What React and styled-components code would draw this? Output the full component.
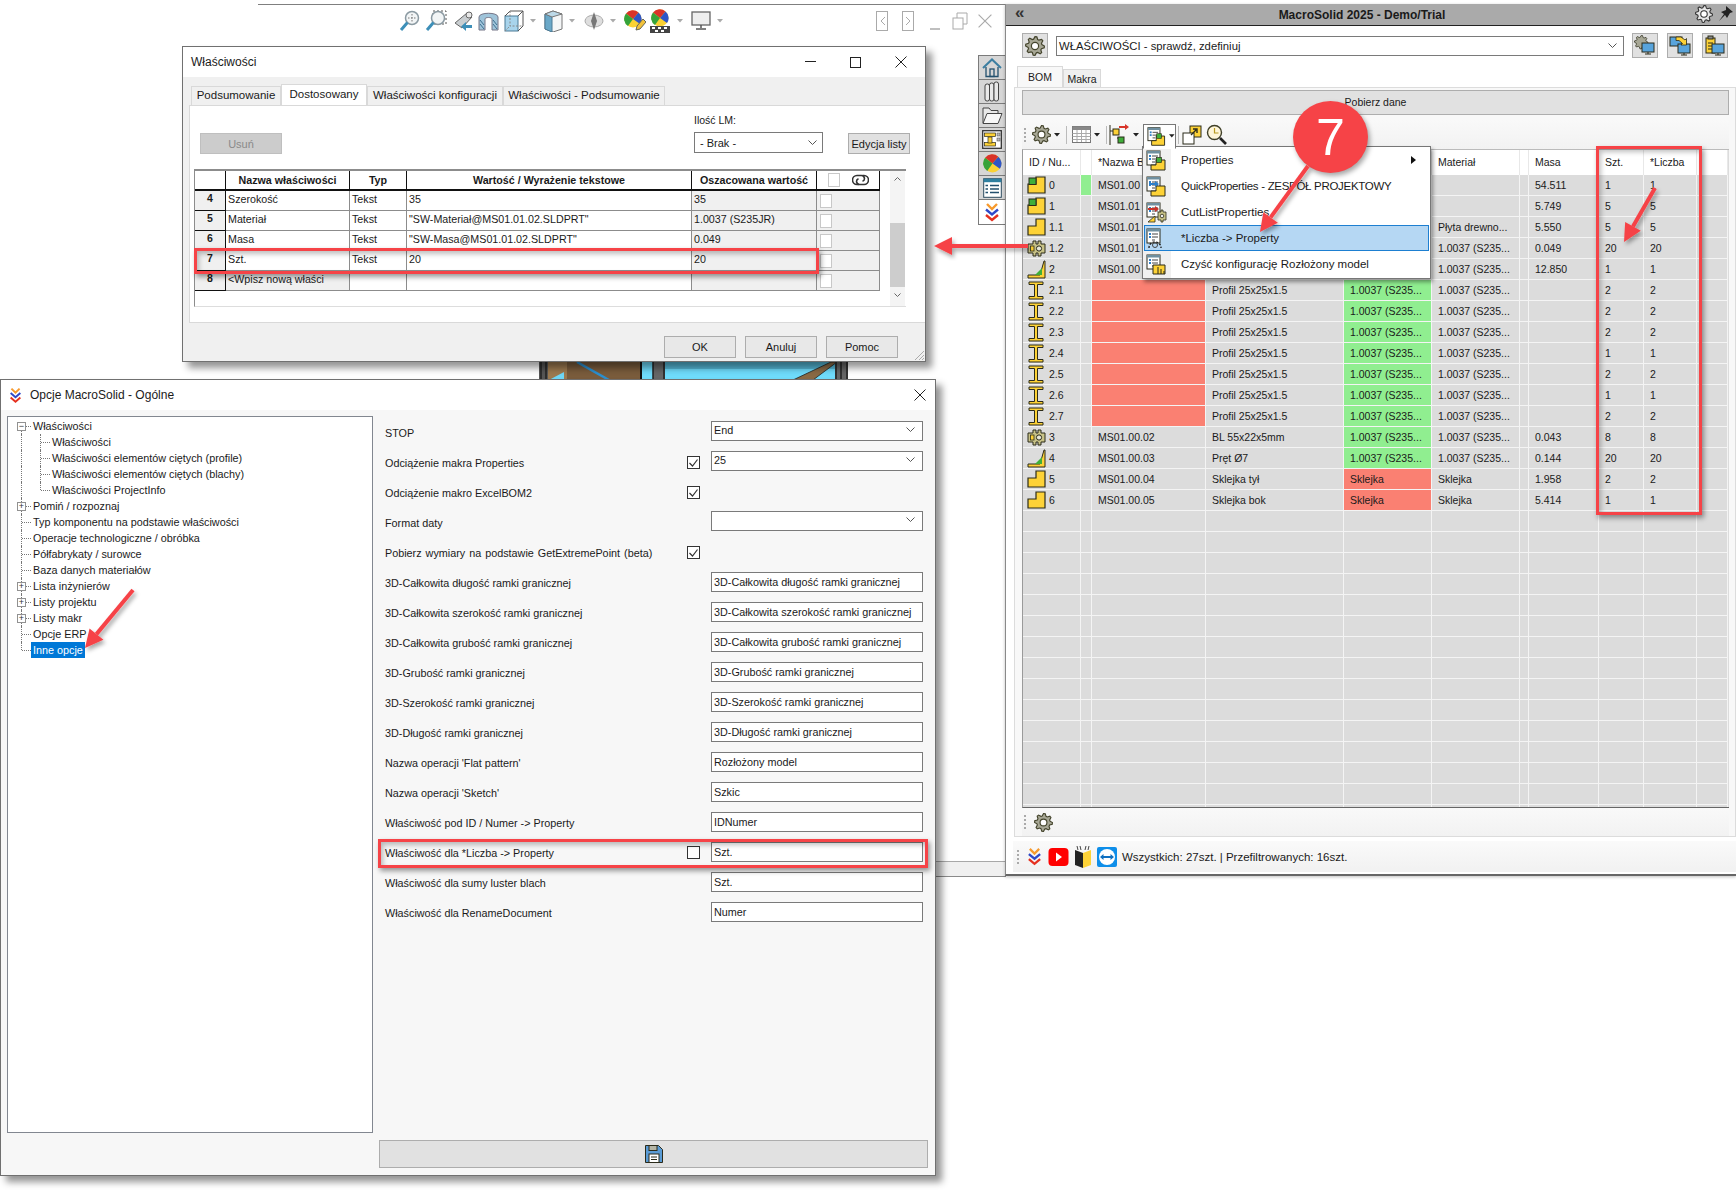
import React from 'react'
import styled, { createGlobalStyle } from 'styled-components'

const GlobalStyle = createGlobalStyle`
  html, body {
    margin: 0;
    padding: 0;
    background: #fff;
  }
  * {
    box-sizing: border-box;
  }
  body {
    font-family: "Liberation Sans", Arial, sans-serif;
    color: #1a1a1a;
  }
`

const RED = '#f64347'
const YEL = '#fdd237'
const INK = '#2b2b1a'

/* ---------- icons ---------- */

const gearPath = (cx, cy, r1, r2, teeth) => {
  let d = ''
  const step = (Math.PI * 2) / (teeth * 4)
  for (let i = 0; i < teeth * 4; i++) {
    const r = i % 4 < 2 ? r1 : r2
    const a = i * step
    d += `${i === 0 ? 'M' : 'L'}${(cx + r * Math.cos(a)).toFixed(2)} ${(cy + r * Math.sin(a)).toFixed(2)} `
  }
  return d + 'Z'
}

const Gear = ({ size = 20, fill = '#a7a795', stroke = '#44442c' }) => (
  <svg width={size} height={size} viewBox="0 0 20 20">
    <path d={gearPath(10, 10, 9.4, 7, 8)} fill={fill} stroke={stroke} strokeWidth="1.2" />
    <circle cx="10" cy="10" r="3.6" fill="#fff" stroke={stroke} strokeWidth="1.2" />
  </svg>
)

const Logo = ({ size = 16 }) => (
  <svg width={size} height={size * 1.25} viewBox="0 0 16 20" fill="none" strokeWidth="2.4">
    <path d="M3 2l5 5 5-5" stroke="#f79a2e" />
    <path d="M2 7.5l6 5 6-5" stroke="#2f48c8" />
    <path d="M2 13l6 5 6-5" stroke="#e5301f" />
  </svg>
)

const Caret = ({ color = '#222' }) => (
  <svg width="6" height="4" viewBox="0 0 6 4"><path d="M0 0h6L3 3.6z" fill={color} /></svg>
)

const ChevronShape = ({ className }) => (
  <svg className={className} width="9" height="6" viewBox="0 0 9 6" fill="none" stroke="#555" strokeWidth="1"><path d="M.5.5l4 4 4-4" /></svg>
)

const Chevron = styled(ChevronShape)`
  margin-left: auto;
  flex: none;
`

const PartIcon = ({ green }) => (
  <svg width="19" height="18" viewBox="0 0 19 18">
    <path d="M9 1h9v16H1V8h8z" fill={YEL} stroke={INK} strokeWidth="1.2" />
    {green && <rect x="2" y="2" width="7" height="6.5" fill="#3fae3a" stroke={INK} strokeWidth="1" />}
  </svg>
)

const BeamIcon = () => (
  <svg width="19" height="19" viewBox="0 0 19 19">
    <path d="M2 1h14v2.5h-5.5v12H16V18H2v-2.5h5.500v-12H2z" fill={YEL} stroke={INK} strokeWidth="1" />
  </svg>
)

const RodIcon = () => (
  <svg width="19" height="19" viewBox="0 0 19 19">
    <path d="M1 15h12l4-14h1v17H1z" fill={YEL} stroke={INK} strokeWidth="1" />
    <path d="M8 15l7-7v7z" fill="#3fae3a" />
  </svg>
)

const SheetIcon = () => (
  <svg width="19" height="19" viewBox="0 0 19 19">
    <path d="M1 5h5V2h3v3h2V2h3v3h4v9h-4v3h-3v-3H9v3H6v-3H1z" fill="#c9c388" stroke={INK} strokeWidth="1" />
    <circle cx="12" cy="9.500" r="2.600" fill="#e8e8d8" stroke={INK} />
    <rect x="3.500" y="7" width="3.500" height="5" fill={YEL} stroke={INK} strokeWidth=".8" />
  </svg>
)

const ListSheet = () => (
  <>
    <rect x="1" y="1" width="13" height="14" fill="#fff" stroke={INK} />
    <rect x="1" y="1" width="13" height="2.500" fill="#6f8f9f" />
    <rect x="3" y="5" width="2" height="2" fill="#2f7fc8" />
    <path d="M6 6h6M6 9h6M6 12h3" stroke="#444" />
    <rect x="3" y="8" width="2" height="2" fill="#2f7fc8" />
  </>
)

const PropsIcon = () => (
  <svg width="21" height="21" viewBox="0 0 21 21">
    <ListSheet />
    <path d="M10 10h9v10H5v-5h5z" fill={YEL} stroke={INK} />
    <rect x="10.500" y="7.500" width="5" height="5" fill="#3fae3a" stroke={INK} strokeWidth=".7" />
  </svg>
)

const QuickIcon = () => (
  <svg width="21" height="21" viewBox="0 0 21 21">
    <ListSheet />
    <path d="M10 10h9v10H5v-5h5z" fill={YEL} stroke={INK} />
    <path d="M3 7h6V5l4 3-4 3V9H3z" fill="#2f7fc8" />
  </svg>
)

const CutIcon = () => (
  <svg width="21" height="21" viewBox="0 0 21 21">
    <ListSheet />
    <path d="M2 6h7V4l4 3-4 3V8H2z" fill="#c8322a" />
    <path d="M12 10h3V8h2v2h3v8h-3v2h-2v-2h-3z" fill="#c9c388" stroke={INK} strokeWidth=".8" />
    <circle cx="16" cy="14" r="1.800" fill="#eee" stroke={INK} strokeWidth=".8" />
    <path d="M2 20h7v-6z" fill={YEL} stroke={INK} strokeWidth=".8" />
  </svg>
)

const HoverCursorIcon = () => (
  <svg width="21" height="21" viewBox="0 0 21 21">
    <ListSheet />
    <path d="M3 20c0-4 3-6 6-6s6 2 6 6" fill="none" stroke="#222" strokeDasharray="2 1.500" strokeWidth="1.400" />
    <circle cx="9" cy="17" r="2.500" fill="none" stroke="#444" />
  </svg>
)

const ClearIcon = () => (
  <svg width="21" height="21" viewBox="0 0 21 21">
    <ListSheet />
    <path d="M7 11h12v9H7z" fill={YEL} stroke={INK} />
    <path d="M12 13v7M15 15v5M18 17v3" stroke={INK} />
  </svg>
)

const Monitor = ({ x, y }) => (
  <g>
    <rect x={x} y={y} width="12" height="9" fill="#58a4dc" stroke={INK} />
    <path d={`M${x + 3} ${y + 11}h6M${x + 6} ${y + 9}v2`} stroke={INK} />
  </g>
)

const SyncGearIcon = () => (
  <svg width="22" height="22" viewBox="0 0 22 22">
    <g transform="translate(0 0) scale(.72)"><path d={gearPath(10, 10, 9.400, 7, 8)} fill="#a7a795" stroke={INK} /></g>
    <Monitor x={8} y={8} />
  </svg>
)

const SyncArrowIcon = () => (
  <svg width="22" height="22" viewBox="0 0 22 22">
    <rect x="1" y="2" width="12" height="9" fill="#58a4dc" stroke={INK} />
    <Monitor x={9} y={9} />
    <path d="M7 2h5l4 3 1.500-1.500V10H12l1.500-1.500L10 5.500H7z" fill={YEL} stroke={INK} strokeWidth=".8" />
  </svg>
)

const SyncDocIcon = () => (
  <svg width="22" height="22" viewBox="0 0 22 22">
    <rect x="2" y="3" width="9" height="15" fill={YEL} stroke={INK} />
    <rect x="4" y="1" width="5" height="3" fill="#888" stroke={INK} />
    <path d="M4 8h5M4 11h5M4 14h5" stroke={INK} />
    <Monitor x={8} y={9} />
  </svg>
)

const TableIcon = () => (
  <svg width="19" height="19" viewBox="0 0 19 19">
    <rect x=".5" y="1.500" width="18" height="16" fill="#fff" stroke="#777" />
    <rect x=".5" y="1.500" width="18" height="3.500" fill="#888" />
    <path d="M.5 8.500h18M.5 11.500h18M.5 14.500h18M5 5v12M9.500 5v12M14 5v12" stroke="#aaa" />
  </svg>
)

const TreeIcon = () => (
  <svg width="22" height="22" viewBox="0 0 22 22">
    <path d="M2 1v20M2 7h5M9 14h3" stroke={INK} fill="none" />
    <rect x="5" y="5" width="6" height="6" fill={YEL} stroke={INK} />
    <rect x="10" y="13" width="6" height="6" fill="#3fae3a" stroke={INK} />
    <path d="M11 2h6V0l4 3-4 3V4h-6z" fill="#d8352a" />
  </svg>
)

const ExportIcon = () => (
  <svg width="20" height="20" viewBox="0 0 20 20">
    <rect x="8" y="1" width="11" height="11" fill={YEL} stroke={INK} />
    <rect x="1" y="8" width="11" height="11" fill="#fff" stroke={INK} />
    <path d="M9 10l5-5M11 4h4v4" fill="none" stroke={INK} strokeWidth="1.400" />
  </svg>
)

const SearchIcon = () => (
  <svg width="21" height="21" viewBox="0 0 21 21" fill="none">
    <circle cx="8.500" cy="8.500" r="7" fill="#fff6d8" stroke="#3f3f28" strokeWidth="1.400" />
    <path d="M8.500 4v5h4" stroke="#b89a20" strokeWidth="1.200" />
    <path d="M14 14l6 6" stroke="#222" strokeWidth="2.600" />
  </svg>
)

const HomeIcon = () => (
  <svg width="20" height="20" viewBox="0 0 20 20" fill="none" stroke="#23506e" strokeWidth="1.300">
    <path d="M1 10l9-8.500L19 10" strokeWidth="2" stroke="#3b7ea1" />
    <path d="M4 9v9.500h12V9" />
    <rect x="8" y="11" width="4" height="7.500" />
  </svg>
)

const BooksIcon = () => (
  <svg width="18" height="22" viewBox="0 0 18 22" fill="#e9e9e9" stroke="#444">
    <rect x="2" y="3" width="4.500" height="17" rx="2" />
    <rect x="6.500" y="2" width="4.500" height="18" rx="2" />
    <rect x="11" y="1" width="4.500" height="19" rx="2" />
  </svg>
)

const FolderIcon = () => (
  <svg width="21" height="19" viewBox="0 0 21 19">
    <path d="M1 17V2h6l2 2.500h7V8" fill="#e8e8e8" stroke="#444" />
    <path d="M1 17.500l4-10h15l-4 10z" fill="#f7f7f7" stroke="#444" />
  </svg>
)

const LayoutIcon = () => (
  <svg width="20" height="19" viewBox="0 0 20 19">
    <rect x=".7" y=".7" width="18.600" height="17.600" fill="#fff" stroke="#333" strokeWidth="1.300" />
    <rect x="2.500" y="12.500" width="11" height="3.500" fill={YEL} stroke={INK} strokeWidth=".7" />
    <rect x="6" y="7" width="4" height="6" fill={YEL} stroke={INK} strokeWidth=".7" />
    <rect x="2.500" y="3" width="11" height="3.500" fill={YEL} stroke={INK} strokeWidth=".7" />
    <rect x="15" y="3" width="3" height="3" fill="#bbb" stroke="#444" strokeWidth=".5" />
    <rect x="15" y="8" width="3" height="3" fill="#bbb" stroke="#444" strokeWidth=".5" />
  </svg>
)

const ColorBall = ({ size = 18 }) => (
  <svg width={size} height={size} viewBox="0 0 18 18">
    <circle cx="9" cy="9" r="8.500" fill="#fbd234" />
    <path d="M9 9L2 3.500A8.500 8.500 0 0 1 14.500 2.500z" fill="#d9332a" />
    <path d="M9 9L14.500 2.500A8.500 8.500 0 0 1 16 14z" fill="#2e55c8" />
    <path d="M9 9L2 3.500A8.500 8.500 0 0 0 4 16z" fill="#35a33a" />
  </svg>
)

const ListIcon = () => (
  <svg width="19" height="20" viewBox="0 0 19 20">
    <rect x=".7" y=".7" width="17.600" height="18.600" fill="#fff" stroke="#2b4a5e" />
    <rect x=".7" y=".7" width="17.600" height="3.500" fill="#2f7f9f" />
    <path d="M7 7.500h9M7 11h9M7 14.500h9M2.500 7.500h2.500M2.500 11h2.500M2.500 14.500h2.500" stroke="#23506e" strokeWidth="1.400" />
  </svg>
)

const YoutubeIcon = () => (
  <svg width="21" height="20" viewBox="0 0 21 20">
    <rect x=".5" y="1" width="20" height="18" rx="4" fill="#f00" />
    <path d="M8 5.500v9l6-4.500z" fill="#fff" />
  </svg>
)

const BookIcon = () => (
  <svg width="18" height="24" viewBox="0 0 18 24">
    <path d="M1 5l8 3v15l-8-3z" fill="#222" />
    <path d="M17 5L9 8v15l8-3z" fill={YEL} />
    <path d="M3 1l1 4M6 1l1 4M12 1l-1 4M15 1l-1 4" stroke="#444" />
  </svg>
)

const TeamIcon = () => (
  <svg width="20" height="20" viewBox="0 0 20 20">
    <rect width="20" height="20" rx="2" fill="#0e8ee9" />
    <circle cx="10" cy="10" r="8" fill="#fff" />
    <path d="M3 10l3.500-3v2h7V7l3.500 3-3.500 3v-2h-7v2z" fill="#0e6fc0" />
  </svg>
)

const FloppyIcon = () => (
  <svg width="18" height="18" viewBox="0 0 18 18">
    <path d="M.5.500h13l4 4v13H.5z" fill="#5a9bd5" stroke="#2b2b1a" />
    <rect x="4" y=".5" width="8" height="5" fill="#b5b5a5" stroke="#2b2b1a" />
    <rect x="4" y="9" width="10" height="8.500" fill="#fff" stroke="#2b2b1a" />
    <path d="M6 12h6M6 14.500h6" stroke="#2b2b1a" />
  </svg>
)

const LinkIcon = () => (
  <svg width="17" height="12" viewBox="0 0 17 12" fill="none" stroke="#333" strokeWidth="1.600">
    <path d="M6.500 10.500H5a4.500 4.500 0 0 1 0-9h4.500a3 3 0 0 1 1 5.800" />
    <path d="M10.500 1.500H12a4.500 4.500 0 0 1 0 9H7.500a3 3 0 0 1-1-5.800" />
  </svg>
)

/* ---------- cad toolbar icons ---------- */

const CadGlass = ({ dashed }) => (
  <svg width="22" height="22" viewBox="0 0 22 22" fill="none">
    {dashed && <rect x="8" y="1" width="13" height="13" stroke="#555" strokeDasharray="2 2" />}
    <circle cx="13" cy="8" r="6.500" fill="#f2f5f6" stroke="#8b9aa2" strokeWidth="1.500" />
    {!dashed && <path d="M13 4v8M9 8h8" stroke="#777" strokeDasharray="1.500 1.500" />}
    <path d="M8.500 12.500L2 20" stroke="#3d8fb8" strokeWidth="3" />
  </svg>
)

const CadPrev = () => (
  <svg width="22" height="22" viewBox="0 0 22 22">
    <path d="M3 13L15 3l5 4-10 11z" fill="#c9ced1" stroke="#666" />
    <circle cx="17" cy="5" r="3" fill="#e8e8e8" stroke="#666" />
    <path d="M20 15h-6v-3l-5 4.500 5 4.500v-3h6z" fill="#3d8fb8" />
  </svg>
)

const CadSection = () => (
  <svg width="21" height="20" viewBox="0 0 21 20">
    <path d="M1 6c0-5 19-5 19 0v13h-6V8c0-2-7-2-7 0v11H1z" fill="#9fc4da" stroke="#778" />
    <path d="M2 9l4 5M2 13l4 5M15 9l4 5M15 13l4 5" stroke="#3d6f8f" />
  </svg>
)

const CadBox = () => (
  <svg width="20" height="22" viewBox="0 0 20 22">
    <rect x="1" y="6" width="13" height="15" fill="#a8d4ec" stroke="#4a7a96" />
    <path d="M1 6l5-5h13v15l-5 5M14 6l5-5" fill="none" stroke="#555" />
    <path d="M6 1v15h13M1 21l5-5" fill="none" stroke="#888" strokeDasharray="2 1.500" />
  </svg>
)

const CadCube = () => (
  <svg width="19" height="22" viewBox="0 0 19 22">
    <path d="M1 4l8-3 9 3v15l-9 3-8-3z" fill="#f4f6f7" stroke="#777" />
    <path d="M1 4l7 3v15l-7-3z" fill="#6aa8c8" stroke="#4a7a96" />
    <path d="M1 4l8-3 9 3-10 3z" fill="#bcd9e8" stroke="#777" />
  </svg>
)

const CadEye = () => (
  <svg width="20" height="20" viewBox="0 0 20 20">
    <ellipse cx="10" cy="10" rx="9" ry="6" fill="#dedede" stroke="#aaa" />
    <path d="M10 1l3 9-3 9-3-9z" fill="#777" />
  </svg>
)

const CadPaint = () => (
  <svg width="22" height="24" viewBox="0 0 22 24">
    <g transform="translate(0 1)"><ColorBall size={18} /></g>
    <path d="M12 21l1-4 6-7 3 3-6 7z" fill="#f2c23a" stroke="#665" />
  </svg>
)

const CadScene = () => (
  <svg width="22" height="24" viewBox="0 0 22 24">
    <g transform="translate(2 0)"><ColorBall size={18} /></g>
    <path d="M1 17h20v7H1z" fill="#444" />
    <path d="M3 18h3v2H3zM9 18h3v2H9zM15 18h3v2h-3zM6 21h3v2H6zM12 21h3v2h-3z" fill="#fff" />
  </svg>
)

const CadScreen = () => (
  <svg width="20" height="20" viewBox="0 0 20 20">
    <rect x="1" y="1" width="18" height="13" fill="#eee" stroke="#666" strokeWidth="1.300" />
    <path d="M10 14v3M5 18h10" stroke="#555" strokeWidth="1.500" />
  </svg>
)

/* ---------- shared window parts ---------- */

const Desktop = styled.div`
  position: relative;
  width: 1736px;
  height: 1192px;
  overflow: hidden;
  background: #fff;
`

const FloatingWindow = styled.section`
  position: absolute;
  left: ${(p) => p.$x}px;
  top: ${(p) => p.$y}px;
  width: ${(p) => p.$w}px;
  height: ${(p) => p.$h}px;
  display: flex;
  flex-direction: column;
  border: 1px solid #707070;
  background: ${(p) => p.$bg || '#f0f0f0'};
  box-shadow: 6px 6px 7px rgba(0, 0, 0, 0.42);
`

const WindowTitle = styled.header`
  display: flex;
  align-items: center;
  flex: none;
  height: ${(p) => p.$h}px;
  padding: 0 ${(p) => p.$pr}px 0 8px;
  gap: 8px;
  background: #fff;
  font-size: 12px;
`

const WindowButtons = styled.div`
  margin-left: auto;
  display: flex;
  align-items: center;
  gap: ${(p) => p.$gap || 0}px;
`

const PlainButton = styled.span`
  display: flex;
  align-items: center;
  justify-content: center;
  width: 21px;
  height: 21px;
`

/* ---------- cad window behind everything ---------- */

const CadWindow = styled.div`
  position: absolute;
  left: 258px;
  top: 4px;
  width: 748px;
  height: 873px;
  display: flex;
  flex-direction: column;
  border-top: 1px solid #7f7f7f;
  border-bottom: 1px solid #8a8a8a;
`

const CadToolbar = styled.div`
  display: flex;
  align-items: center;
  height: 31px;
  padding-left: 141px;
`

const CadTool = styled.span`
  display: flex;
  align-items: center;
  margin-left: ${(p) => p.$ml || 0}px;
`

const CadCorner = styled.div`
  display: flex;
  align-items: center;
  gap: 10px;
  margin-left: auto;
  margin-right: 14px;
  color: #aaa;
`

const CadCanvas = styled.div`
  flex: 1;
  position: relative;
`

const ModelPiece = styled.svg`
  position: absolute;
  left: 281px;
  top: 326px;
`

const CadStatus = styled.div`
  height: 15px;
  flex: none;
  background: #f0f0f0;
  border-top: 1px solid #a8a8a8;
`

const TaskPane = styled.nav`
  position: absolute;
  left: 978px;
  top: 55px;
  width: 27px;
  display: flex;
  flex-direction: column;
  border: 1px solid #7b7b7b;
  border-right: none;
`

const TaskTab = styled.span`
  display: flex;
  align-items: center;
  justify-content: center;
  height: 24px;
  background: ${(p) => (p.$active ? '#fff' : '#d6d6d6')};
  border-bottom: ${(p) => (p.$active ? 'none' : '1px solid #7b7b7b')};
`

const ResizeGrip = styled.svg`
  position: absolute;
  right: 0;
  bottom: 0;
`

/* ---------- properties dialog ---------- */

const PropTabs = styled.div`
  display: flex;
  align-items: flex-end;
  height: 28px;
  padding-left: 8px;
  flex: none;
`

const PropTab = styled.span`
  display: flex;
  align-items: center;
  justify-content: center;
  width: ${(p) => p.$w}px;
  height: ${(p) => (p.$active ? 21 : 19)}px;
  padding-bottom: 2px;
  font-size: 11.5px;
  background: ${(p) => (p.$active ? '#fff' : '#f0f0f0')};
  border: 1px solid #d9d9d9;
  border-bottom: none;
`

const PropPanel = styled.div`
  height: 218px;
  margin-left: 6px;
  flex: none;
  background: #fff;
  border: 1px solid #d9d9d9;
  border-right: none;
  padding: 8px 19px 0 4px;
`

const ListControls = styled.div`
  display: grid;
  grid-template-columns: 82px 412px 129px 62px;
  height: 55px;
  padding-left: 6px;
`

const DisabledButton = styled.span`
  grid-column: 1;
  align-self: end;
  margin-bottom: 15px;
  display: flex;
  align-items: center;
  justify-content: center;
  height: 21px;
  background: #cccccc;
  border: 1px solid #bfbfbf;
  color: #8a8a8a;
  font-size: 11px;
`

const LmField = styled.label`
  grid-column: 3;
  display: flex;
  flex-direction: column;
  gap: 6px;
  font-size: 10.5px;
  line-height: 12px;
`

const LmSelect = styled.span`
  display: flex;
  align-items: center;
  justify-content: space-between;
  height: 21px;
  padding: 0 5px;
  border: 1px solid #7a7a7a;
  background: #fff;
  font-size: 11px;
`

const EditListButton = styled.span`
  grid-column: 4;
  align-self: end;
  margin: 0 0 15px 25px;
  width: 62px;
  height: 21px;
  flex: none;
  display: flex;
  align-items: center;
  justify-content: center;
  white-space: nowrap;
  background: #e1e1e1;
  border: 1px solid #adadad;
  font-size: 11px;
`

const PropGridWrap = styled.div`
  display: flex;
  height: 138px;
  width: 712px;
  border-top: 2px solid #8c8c8c;
  border-left: 1px solid #8c8c8c;
  border-bottom: 1px solid #ddd;
`

const PropGrid = styled.div`
  display: grid;
  grid-template-columns: 31px 124px 57px 285px 125px 63px;
  grid-auto-rows: 20px;
  align-content: start;
`

const PropHead = styled.div`
  display: flex;
  align-items: center;
  justify-content: center;
  gap: 12px;
  font-size: 10.700px;
  font-weight: 700;
  white-space: nowrap;
  border-right: 1px solid #111;
  border-bottom: 2px solid #111;
`

const PropCell = styled.div`
  display: flex;
  align-items: center;
  padding: 0 0 3px 2px;
  font-size: 10.700px;
  white-space: nowrap;
  overflow: hidden;
  background: ${(p) => (p.$shade ? '#f0f0f0' : '#fff')};
  border-right: 1px solid #8c8c8c;
  border-bottom: 1px solid #8c8c8c;
`

const PropBoxCell = styled(PropCell)`
  padding-bottom: 0;
`

const PropRowNo = styled.div`
  display: flex;
  align-items: center;
  justify-content: center;
  padding-bottom: 5px;
  font-size: 10.500px;
  font-weight: 700;
  background: #f0f0f0;
  border-right: 1px solid #111;
  border-bottom: 1px solid #111;
`

const BlankBox = styled.span`
  display: block;
  width: 12px;
  height: 14px;
  background: #fff;
  border: 1px solid #c8c8c8;
  margin-left: 1px;
`

const VScroll = styled.div`
  width: 15px;
  margin-left: 10px;
  display: flex;
  flex-direction: column;
  align-items: center;
  background: #f4f4f4;
  color: #555;
`

const ScrollArrow = styled.svg`
  flex: none;
  margin: 6px 0;
`

const ScrollThumb = styled.div`
  width: 100%;
  height: 64px;
  margin-top: 36px;
  background: #cdcdcd;
`

const DialogFooter = styled.div`
  display: flex;
  justify-content: flex-end;
  gap: 9px;
  padding: 13px 27px 0 0;
`

const FooterButton = styled.span`
  display: flex;
  align-items: center;
  justify-content: center;
  width: 72px;
  height: 22px;
  background: #e8e8e8;
  border: 1px solid #adadad;
  font-size: 11px;
`

/* ---------- options dialog ---------- */

const OptionsBody = styled.div`
  display: flex;
  flex: none;
  padding: 6px 0 0 6px;
`

const TreePanel = styled.div`
  width: 366px;
  height: 717px;
  flex: none;
  padding-top: 1px;
  background: #fff;
  border: 1px solid #828790;
`

const TreeRow = styled.div`
  position: relative;
  display: flex;
  align-items: center;
  height: 16px;
  padding-left: ${(p) => (p.$level ? 42 : 23)}px;
  font-size: 10.800px;
  white-space: nowrap;

  &::before {
    content: '';
    position: absolute;
    left: 13px;
    top: ${(p) => (p.$first ? 8 : 0)}px;
    bottom: ${(p) => (p.$last ? 8 : 0)}px;
    border-left: 1px dotted #777;
  }

  &::after {
    content: '';
    position: absolute;
    left: ${(p) => (p.$level ? 33 : 14)}px;
    width: 9px;
    top: 8px;
    border-top: 1px dotted #777;
  }
`

const SubGuide = styled.span`
  position: absolute;
  left: 32px;
  top: 0;
  bottom: ${(p) => (p.$last ? 8 : 0)}px;
  border-left: 1px dotted #777;
`

const Expander = styled.span`
  position: absolute;
  z-index: 1;
  left: 9px;
  top: 4px;
  width: 9px;
  height: 9px;
  display: flex;
  align-items: center;
  justify-content: center;
  background: #fff;
  border: 1px solid #919191;
  font-size: 9px;
  line-height: 7px;
  color: #333;
`

const TreeText = styled.span`
  padding: 0 2px;
  line-height: 16px;
  background: ${(p) => (p.$selected ? '#0078d7' : 'transparent')};
  color: ${(p) => (p.$selected ? '#fff' : 'inherit')};
`

const OptionForm = styled.div`
  padding-left: 12px;
  width: 555px;
`

const OptionRow = styled.div`
  display: grid;
  grid-template-columns: 301px 25px 212px;
  align-items: center;
  height: 30px;
`

const OptionLabel = styled.span`
  font-size: 10.800px;
  padding-top: 4px;
  word-spacing: ${(p) => p.$spread || 0}px;
  white-space: nowrap;
`

const CheckBox = styled.span`
  display: flex;
  align-items: center;
  justify-content: center;
  width: 13px;
  height: 13px;
  margin: 3px 0 0 1px;
  background: #fff;
  border: 1px solid #333;
`

const FieldBox = styled.span`
  grid-column: 3;
  display: flex;
  align-items: center;
  height: 20px;
  margin-top: ${(p) => (p.$select ? 0 : 1)}px;
  padding: 0 7px ${(p) => (p.$select ? 2 : 0)}px 2px;
  background: #fff;
  border: 1px solid #7a7a7a;
  font-size: 10.800px;
  white-space: nowrap;
`

const SaveBar = styled.div`
  display: flex;
  align-items: center;
  justify-content: center;
  width: 549px;
  height: 28px;
  margin: 7px 0 0 378px;
  background: #e1e1e1;
  border: 1px solid #adadad;
`

/* ---------- macrosolid panel ---------- */

const MacroPanel = styled.section`
  position: absolute;
  left: 1005px;
  top: 4px;
  width: 731px;
  height: 872px;
  display: flex;
  flex-direction: column;
  background: #fff;
  border-left: 1px solid #8a8a8a;
  border-bottom: 2px solid #666;
  box-shadow: 0 1px 3px rgba(0, 0, 0, 0.25);
`

const MacroTitle = styled.header`
  position: relative;
  display: flex;
  align-items: center;
  justify-content: center;
  height: 22px;
  padding-right: 18px;
  flex: none;
  background: #aaaaaa;
  border-bottom: 1px solid #222;
  font-size: 12px;
  font-weight: 700;
`

const TitleIcons = styled.div`
  position: absolute;
  top: 1px;
  right: 3px;
  display: flex;
  align-items: center;
  gap: 5px;
`

const Collapse = styled.span`
  position: absolute;
  left: 9px;
  top: 1px;
  font-size: 17px;
  line-height: 15px;
  font-weight: 700;
  color: #333;
`

const MacroBody = styled.div`
  flex: 1;
  display: flex;
  flex-direction: column;
  padding-left: 8px;
  background: #fff;
`

const MacroTop = styled.div`
  display: flex;
  align-items: center;
  gap: 8px;
  height: 25px;
  margin-top: 7px;
  padding-left: 8px;
  flex: none;
`

const SquareButton = styled.span`
  display: flex;
  align-items: center;
  justify-content: center;
  width: 26px;
  height: 25px;
  flex: none;
  margin-left: ${(p) => p.$ml || 0}px;
  background: #e1e1e1;
  border: 1px solid #adadad;
`

const MacroCombo = styled.span`
  display: flex;
  align-items: center;
  width: 568px;
  height: 20px;
  padding: 0 6px 0 2px;
  background: #fff;
  border: 1px solid #7a7a7a;
  font-size: 11.300px;
`

const MacroTabs = styled.div`
  display: flex;
  align-items: flex-end;
  height: 21px;
  margin: 8px 0 0 3px;
  flex: none;
`

const MacroTab = styled.span`
  display: flex;
  align-items: center;
  justify-content: center;
  width: ${(p) => p.$w}px;
  height: ${(p) => (p.$active ? 21 : 18)}px;
  font-size: 10.500px;
  background: ${(p) => (p.$active ? '#f8f8f8' : '#f0f0f0')};
  border: 1px solid #d9d9d9;
  border-bottom: none;
`

const TabContent = styled.div`
  display: flex;
  flex-direction: column;
  height: 750px;
  width: 722px;
  flex: none;
  padding: 2px 6px 0 7px;
  background: #f8f8f8;
  border: 1px solid #dcdcdc;
`

const FetchButton = styled.div`
  display: flex;
  align-items: center;
  justify-content: center;
  height: 25px;
  padding-bottom: 2px;
  flex: none;
  background: #e1e1e1;
  border: 1px solid #adadad;
  font-size: 10.500px;
`

const ToolStrip = styled.div`
  position: relative;
  display: flex;
  align-items: center;
  height: ${(p) => p.$h}px;
  flex: none;
  margin-top: ${(p) => p.$mt || 0}px;
  padding-left: 2px;
  background: linear-gradient(#f9f9f9, #f2f2f2);
`

const Grip = styled.span`
  width: 2px;
  height: 14px;
  border-left: 2px dotted #aaa;
`

const ToolItem = styled.span`
  display: flex;
  align-items: center;
  gap: 3px;
  margin-left: ${(p) => p.$ml || 0}px;
`

const ToolSep = styled.span`
  width: 1px;
  height: 18px;
  margin-left: ${(p) => p.$ml || 0}px;
  background: #bbb;
`

const ActiveTool = styled.span`
  position: relative;
  z-index: 3;
  display: flex;
  align-items: center;
  gap: 3px;
  width: 33px;
  height: 25px;
  margin-left: ${(p) => p.$ml || 0}px;
  padding-left: 3px;
  background: #fff;
  border: 1px solid #777;
  border-bottom-color: #fff;
  margin-top: 3px;
`

const BomFrame = styled.div`
  position: relative;
  height: 659px;
  flex: none;
  overflow: hidden;
  border-left: 1px solid #9a9a9a;
  border-bottom: 1px solid #666;
  border-top: 1px solid #bbb;
`

const BomGrid = styled.div`
  display: grid;
  grid-template-columns: 58px 11px 114px 138px 88px 88px 9px 70px 45px 53px 31px;
  grid-template-rows: 25px;
  grid-auto-rows: 21px;
  background: #dcdcdc;
`

const BomHead = styled.div`
  display: flex;
  align-items: center;
  padding: 0 0 1px 6px;
  background: #fff;
  font-size: 10.500px;
  white-space: nowrap;
  overflow: hidden;
  border-right: 1px solid #e8e8e8;
`

const BomCell = styled.div`
  display: flex;
  align-items: center;
  gap: 3px;
  padding-left: ${(p) => p.$pad ?? 6}px;
  font-size: 10.500px;
  white-space: nowrap;
  overflow: hidden;
  background: ${(p) => (p.$tone === 'red' ? '#fa8072' : p.$tone === 'green' ? '#90ee90' : '#dcdcdc')};
  border-right: 1px solid #f4f4f4;
  border-bottom: 1px solid #f4f4f4;
`

const Menu = styled.div`
  position: absolute;
  z-index: 2;
  left: 120px;
  top: -3px;
  width: 289px;
  height: 133px;
  display: flex;
  flex-direction: column;
  padding: 0 1px;
  background: linear-gradient(to right, #f0f0f0 28px, #fff 28px);
  border: 1px solid #777;
  box-shadow: 2px 3px 4px rgba(0, 0, 0, 0.4);
`

const MenuItem = styled.div`
  position: relative;
  display: flex;
  align-items: center;
  height: 26px;
  flex: none;
  padding-left: 2px;
  font-size: 11.500px;
  letter-spacing: ${(p) => (p.$tight ? '-0.3px' : '0')};
  white-space: nowrap;
  background: ${(p) => (p.$hot ? '#b5d7f3' : 'transparent')};
  outline: ${(p) => (p.$hot ? '1px solid #1d7fd1' : 'none')};
  outline-offset: -1px;
`

const MenuIcon = styled.span`
  display: flex;
  width: 35px;
  flex: none;
`

const SubArrow = styled.span`
  position: absolute;
  right: 13px;
  top: 9px;
  border-left: 5px solid #111;
  border-top: 4px solid transparent;
  border-bottom: 4px solid transparent;
`

const MenuAnchor = styled.div`
  position: relative;
  flex: none;
`

const StatusStrip = styled.footer`
  display: flex;
  align-items: center;
  gap: 3px;
  height: 31px;
  margin: 4px 0 0 -1px;
  padding-left: 4px;
  background: linear-gradient(#fafafa, #f1f1f1);
  font-size: 11.500px;
  white-space: nowrap;
`

const StatusIcon = styled.span`
  display: flex;
  align-items: center;
  justify-content: center;
  width: 21px;
  margin-left: ${(p) => p.$ml || 0}px;
`

const StatusText = styled.span`
  margin-left: 2px;
`

/* ---------- annotations on top ---------- */

const RedFrame = styled.div`
  position: absolute;
  z-index: 5;
  left: ${(p) => p.$x}px;
  top: ${(p) => p.$y}px;
  width: ${(p) => p.$w}px;
  height: ${(p) => p.$h}px;
  border: 3px solid ${RED};
  box-shadow: 2px 3px 5px rgba(0, 0, 0, 0.4), inset 2px 3px 5px rgba(0, 0, 0, 0.25);
  pointer-events: none;
`

const StepBadge = styled.div`
  position: absolute;
  z-index: 5;
  left: 1293px;
  top: 101px;
  width: 75px;
  height: 72px;
  display: flex;
  align-items: center;
  justify-content: center;
  border-radius: 50%;
  background: ${RED};
  box-shadow: 2px 3px 5px rgba(0, 0, 0, 0.35);
  color: #fff;
  font-size: 52px;
  line-height: 1;
`

const ArrowLayer = styled.svg`
  position: absolute;
  z-index: 6;
  left: 0;
  top: 0;
  pointer-events: none;
`

const Arrow = ({ from, to, head = 18, w = 9 }) => {
  const [x1, y1] = from
  const [x2, y2] = to
  const len = Math.hypot(x2 - x1, y2 - y1)
  const ux = (x2 - x1) / len
  const uy = (y2 - y1) / len
  const bx = x2 - ux * head
  const by = y2 - uy * head
  const points = `${x2},${y2} ${bx - uy * w},${by + ux * w} ${bx + uy * w},${by - ux * w}`
  return (
    <g filter="url(#arrowShadow)">
      <line x1={x1} y1={y1} x2={bx} y2={by} stroke={RED} strokeWidth="4" />
      <polygon points={points} fill={RED} />
    </g>
  )
}

/* ---------- data ---------- */

const propRows = [
  { no: 4, name: 'Szerokość', type: 'Tekst', value: '35', result: '35' },
  { no: 5, name: 'Materiał', type: 'Tekst', value: '"SW-Materiał@MS01.01.02.SLDPRT"', result: '1.0037 (S235JR)' },
  { no: 6, name: 'Masa', type: 'Tekst', value: '"SW-Masa@MS01.01.02.SLDPRT"', result: '0.049' },
  { no: 7, name: 'Szt.', type: 'Tekst', value: '20', result: '20' },
  { no: 8, name: '<Wpisz nową właści', type: '', value: '', result: '' },
]

const treeItems = [
  { text: 'Właściwości', exp: '−', first: true },
  { text: 'Właściwości', level: 1 },
  { text: 'Właściwości elementów ciętych (profile)', level: 1 },
  { text: 'Właściwości elementów ciętych (blachy)', level: 1 },
  { text: 'Właściwości ProjectInfo', level: 1, lastSub: true },
  { text: 'Pomiń / rozpoznaj', exp: '+' },
  { text: 'Typ komponentu na podstawie właściwości' },
  { text: 'Operacje technologiczne / obróbka' },
  { text: 'Półfabrykaty / surowce' },
  { text: 'Baza danych materiałów' },
  { text: 'Lista inżynierów', exp: '+' },
  { text: 'Listy projektu', exp: '+' },
  { text: 'Listy makr', exp: '+' },
  { text: 'Opcje ERP' },
  { text: 'Inne opcje', selected: true, last: true },
]

const optionRows = [
  { label: 'STOP', select: 'End' },
  { label: 'Odciążenie makra Properties', check: true, select: '25' },
  { label: 'Odciążenie makro ExcelBOM2', check: true },
  { label: 'Format daty', select: '' },
  { label: 'Pobierz wymiary na podstawie GetExtremePoint (beta)', check: true, spread: 1 },
  { label: '3D-Całkowita długość ramki granicznej', field: '3D-Całkowita długość ramki granicznej' },
  { label: '3D-Całkowita szerokość ramki granicznej', field: '3D-Całkowita szerokość ramki granicznej' },
  { label: '3D-Całkowita grubość ramki granicznej', field: '3D-Całkowita grubość ramki granicznej' },
  { label: '3D-Grubość ramki granicznej', field: '3D-Grubość ramki granicznej' },
  { label: '3D-Szerokość ramki granicznej', field: '3D-Szerokość ramki granicznej' },
  { label: '3D-Długość ramki granicznej', field: '3D-Długość ramki granicznej' },
  { label: "Nazwa operacji 'Flat pattern'", field: 'Rozłożony model' },
  { label: "Nazwa operacji 'Sketch'", field: 'Szkic' },
  { label: 'Właściwość pod ID / Numer -> Property', field: 'IDNumer' },
  { label: 'Właściwość dla *Liczba -> Property', field: 'Szt.', check: false },
  { label: 'Właściwość dla sumy luster blach', field: 'Szt.' },
  { label: 'Właściwość dla RenameDocument', field: 'Numer' },
]

const profile = (id, qty) => ({
  id, icon: 'beam', redName: true, desc: 'Profil 25x25x1.5', mat: '1.0037 (S235...', matTone: 'green',
  mat2: '1.0037 (S235...', qty,
})

const bomRows = [
  { id: '0', icon: 'asm', flag: true, name: 'MS01.00', mass: '54.511', qty: '1' },
  { id: '1', icon: 'asm', name: 'MS01.01', mass: '5.749', qty: '5' },
  { id: '1.1', icon: 'part', name: 'MS01.01', mat2: 'Płyta drewno...', mass: '5.550', qty: '5' },
  { id: '1.2', icon: 'sheet', name: 'MS01.01', mat2: '1.0037 (S235...', mass: '0.049', qty: '20' },
  { id: '2', icon: 'rod', name: 'MS01.00', mat2: '1.0037 (S235...', mass: '12.850', qty: '1' },
  profile('2.1', '2'),
  profile('2.2', '2'),
  profile('2.3', '2'),
  profile('2.4', '1'),
  profile('2.5', '2'),
  profile('2.6', '1'),
  profile('2.7', '2'),
  { id: '3', icon: 'sheet', name: 'MS01.00.02', desc: 'BL 55x22x5mm', mat: '1.0037 (S235...', matTone: 'green', mat2: '1.0037 (S235...', mass: '0.043', qty: '8' },
  { id: '4', icon: 'rod', name: 'MS01.00.03', desc: 'Pręt Ø7', mat: '1.0037 (S235...', matTone: 'green', mat2: '1.0037 (S235...', mass: '0.144', qty: '20' },
  { id: '5', icon: 'part', name: 'MS01.00.04', desc: 'Sklejka tył', mat: 'Sklejka', matTone: 'red', mat2: 'Sklejka', mass: '1.958', qty: '2' },
  { id: '6', icon: 'part', name: 'MS01.00.05', desc: 'Sklejka bok', mat: 'Sklejka', matTone: 'red', mat2: 'Sklejka', mass: '5.414', qty: '1' },
]

const rowIcons = {
  asm: <PartIcon green />,
  part: <PartIcon />,
  beam: <BeamIcon />,
  rod: <RodIcon />,
  sheet: <SheetIcon />,
}

const menuItems = [
  { icon: <PropsIcon />, text: 'Properties', sub: true },
  { icon: <QuickIcon />, text: 'QuickProperties - ZESPÓŁ PROJEKTOWY', tight: true },
  { icon: <CutIcon />, text: 'CutListProperties' },
  { icon: <HoverCursorIcon />, text: '*Liczba -> Property', hot: true },
  { icon: <ClearIcon />, text: 'Czyść konfigurację Rozłożony model' },
]

const bomHeads = ['ID / Nu...', '', '*Nazwa B', '', '', 'Materiał', '', 'Masa', 'Szt.', '*Liczba', '']

const WinX = ({ size = 12, color = '#222' }) => (
  <svg width={size} height={size} viewBox="0 0 12 12" stroke={color} strokeWidth="1"><path d="M.5.5l11 11M11.500.5l-11 11" /></svg>
)

const BomTable = () => (
  <BomFrame>
    <BomGrid>
      {bomHeads.map((h, i) => <BomHead key={i}>{h}</BomHead>)}
      {bomRows.map((r) => (
        <React.Fragment key={r.id}>
          <BomCell $pad={4}>{rowIcons[r.icon]}{r.id}</BomCell>
          <BomCell $pad={0} $tone={r.flag ? 'green' : undefined} />
          <BomCell $tone={r.redName ? 'red' : undefined}>{r.name}</BomCell>
          <BomCell>{r.desc}</BomCell>
          <BomCell $tone={r.matTone}>{r.mat}</BomCell>
          <BomCell>{r.mat2}</BomCell>
          <BomCell $pad={0} />
          <BomCell>{r.mass}</BomCell>
          <BomCell>{r.qty}</BomCell>
          <BomCell>{r.qty}</BomCell>
          <BomCell $pad={0} />
        </React.Fragment>
      ))}
      {Array.from({ length: 165 }, (_, i) => <BomCell key={i} $pad={0} />)}
    </BomGrid>
  </BomFrame>
)

const App = () => (
  <Desktop>
    <GlobalStyle />

    <CadWindow>
      <CadToolbar>
        <CadTool><CadGlass /></CadTool>
        <CadTool $ml={4}><CadGlass dashed /></CadTool>
        <CadTool $ml={5}><CadPrev /></CadTool>
        <CadTool $ml={4}><CadSection /></CadTool>
        <CadTool $ml={5}><CadBox /></CadTool>
        <CadTool $ml={6}><Caret color="#aaa" /></CadTool>
        <CadTool $ml={8}><CadCube /></CadTool>
        <CadTool $ml={6}><Caret color="#aaa" /></CadTool>
        <CadTool $ml={9}><CadEye /></CadTool>
        <CadTool $ml={6}><Caret color="#aaa" /></CadTool>
        <CadTool $ml={8}><CadPaint /></CadTool>
        <CadTool $ml={3}><CadScene /></CadTool>
        <CadTool $ml={6}><Caret color="#aaa" /></CadTool>
        <CadTool $ml={8}><CadScreen /></CadTool>
        <CadTool $ml={6}><Caret color="#aaa" /></CadTool>
        <CadCorner>
          <svg width="16" height="20" viewBox="0 0 16 20" fill="none" stroke="#aaa"><rect x=".5" y=".5" width="11" height="19" /><path d="M9 6L5 10l4 4" /></svg>
          <svg width="16" height="20" viewBox="0 0 16 20" fill="none" stroke="#aaa"><rect x=".5" y=".5" width="11" height="19" /><path d="M4 6l4 4-4 4" /></svg>
          <svg width="14" height="20" viewBox="0 0 14 20" fill="none" stroke="#aaa" strokeWidth="1.500"><path d="M2 18h10" /></svg>
          <svg width="16" height="20" viewBox="0 0 16 20" fill="none" stroke="#aaa"><rect x="1" y="7" width="10" height="11" /><path d="M5 7V2h10v11h-4" /></svg>
          <WinX size={14} color="#aaa" />
        </CadCorner>
      </CadToolbar>
      <CadCanvas>
        <ModelPiece width="310" height="18" viewBox="0 0 310 18">
          <rect x="0" y="0" width="9" height="18" fill="#555" />
          <path d="M2 0v18M7 0v18" stroke="#222" strokeWidth="1.500" />
          <rect x="9" y="0" width="20" height="18" fill="#9c7a50" />
          <path d="M10 18l15-8v8z" fill="#6fd8f7" />
          <rect x="28" y="0" width="74" height="18" fill="#7a5c3c" />
          <path d="M38 0l32 18" stroke="#2c90d0" strokeWidth="2.500" />
          <rect x="102" y="0" width="12" height="18" fill="#6fdcfc" />
          <rect x="101" y="0" width="2" height="18" fill="#111" />
          <rect x="114" y="0" width="12" height="18" fill="#666" />
          <path d="M114 0v18M125 0v18" stroke="#222" strokeWidth="1.500" />
          <rect x="126" y="0" width="170" height="18" fill="#6fdcfc" />
          <rect x="126" y="0" width="170" height="7" fill="#4aa8c8" opacity=".7" />
          <path d="M254 18l38-18h6l-24 18z" fill="#8a6a45" stroke="#222" strokeWidth=".8" />
          <rect x="296" y="0" width="13" height="18" fill="#666" />
          <path d="M297 0v18M302 0v18M308 0v18" stroke="#222" strokeWidth="1.500" />
        </ModelPiece>
      </CadCanvas>
      <CadStatus />
    </CadWindow>

    <TaskPane>
      <TaskTab><HomeIcon /></TaskTab>
      <TaskTab><BooksIcon /></TaskTab>
      <TaskTab><FolderIcon /></TaskTab>
      <TaskTab><LayoutIcon /></TaskTab>
      <TaskTab><ColorBall size={19} /></TaskTab>
      <TaskTab><ListIcon /></TaskTab>
      <TaskTab $active><Logo /></TaskTab>
    </TaskPane>

    <FloatingWindow $x={182} $y={46} $w={744} $h={316}>
      <WindowTitle $h={30} $pr={14}>
        Właściwości
        <WindowButtons $gap={24}>
          <PlainButton><svg width="11" height="2"><rect width="11" height="1" fill="#222" /></svg></PlainButton>
          <PlainButton><svg width="11" height="11" fill="none" stroke="#222"><rect x=".5" y=".5" width="10" height="10" /></svg></PlainButton>
          <PlainButton><WinX /></PlainButton>
        </WindowButtons>
      </WindowTitle>
      <PropTabs>
        <PropTab $w={90}>Podsumowanie</PropTab>
        <PropTab $w={86} $active>Dostosowany</PropTab>
        <PropTab $w={136}>Właściwości konfiguracji</PropTab>
        <PropTab $w={162}>Właściwości - Podsumowanie</PropTab>
      </PropTabs>
      <PropPanel>
        <ListControls>
          <DisabledButton>Usuń</DisabledButton>
          <LmField>
            Ilość LM:
            <LmSelect>- Brak - <Chevron /></LmSelect>
          </LmField>
          <EditListButton>Edycja listy</EditListButton>
        </ListControls>
        <PropGridWrap>
          <PropGrid>
            <PropHead />
            <PropHead>Nazwa właściwości</PropHead>
            <PropHead>Typ</PropHead>
            <PropHead>Wartość / Wyrażenie tekstowe</PropHead>
            <PropHead>Oszacowana wartość</PropHead>
            <PropHead>
              <BlankBox />
              <LinkIcon />
            </PropHead>
            {propRows.map((r) => (
              <React.Fragment key={r.no}>
                <PropRowNo>{r.no}</PropRowNo>
                <PropCell $shade={r.no === 8}>{r.name}</PropCell>
                <PropCell>{r.type}</PropCell>
                <PropCell>{r.value}</PropCell>
                <PropCell $shade>{r.result}</PropCell>
                <PropBoxCell $shade><BlankBox /></PropBoxCell>
              </React.Fragment>
            ))}
          </PropGrid>
          <VScroll>
            <ScrollArrow width="7" height="4" viewBox="0 0 7 4" fill="none" stroke="#666"><path d="M.5 3.500l3-3 3 3" /></ScrollArrow>
            <ScrollThumb />
            <ScrollArrow width="7" height="4" viewBox="0 0 7 4" fill="none" stroke="#666"><path d="M.5.5l3 3 3-3" /></ScrollArrow>
          </VScroll>
        </PropGridWrap>
      </PropPanel>
      <DialogFooter>
        <FooterButton>OK</FooterButton>
        <FooterButton>Anuluj</FooterButton>
        <FooterButton>Pomoc</FooterButton>
      </DialogFooter>
      <ResizeGrip width="12" height="12" viewBox="0 0 12 12" stroke="#aaa"><path d="M11 2L2 11M11 6l-5 5M11 9l-2 2" /></ResizeGrip>
    </FloatingWindow>

    <FloatingWindow $x={0} $y={379} $w={936} $h={797} $bg="#f7f7f7">
      <WindowTitle $h={30} $pr={5}>
        <Logo size={13} />
        Opcje MacroSolid - Ogólne
        <WindowButtons>
          <PlainButton><WinX /></PlainButton>
        </WindowButtons>
      </WindowTitle>
      <OptionsBody>
        <TreePanel>
          {treeItems.map((t, i) => (
            <TreeRow key={i} $level={t.level} $first={t.first} $last={t.last}>
              {t.level && <SubGuide $last={t.lastSub} />}
              {t.exp && <Expander>{t.exp}</Expander>}
              <TreeText $selected={t.selected}>{t.text}</TreeText>
            </TreeRow>
          ))}
        </TreePanel>
        <OptionForm>
          {optionRows.map((o, i) => (
            <OptionRow key={i}>
              <OptionLabel $spread={o.spread}>{o.label}</OptionLabel>
              {o.check !== undefined && (
                <CheckBox>
                  {o.check && (
                    <svg width="9" height="8" viewBox="0 0 9 8" fill="none" stroke="#333" strokeWidth="1.200"><path d="M.5 4l3 3 5-6.500" /></svg>
                  )}
                </CheckBox>
              )}
              {o.select !== undefined && <FieldBox $select>{o.select}<Chevron /></FieldBox>}
              {o.field && <FieldBox>{o.field}</FieldBox>}
            </OptionRow>
          ))}
        </OptionForm>
      </OptionsBody>
      <SaveBar><FloppyIcon /></SaveBar>
    </FloatingWindow>

    <MacroPanel>
      <MacroTitle>
        <Collapse>«</Collapse>
        MacroSolid 2025 - Demo/Trial
        <TitleIcons>
          <Gear size={18} fill="#e5e5e5" stroke="#333" />
          <svg width="15" height="16" viewBox="0 0 15 16"><path d="M8 0l7 6-3 1-3 5-2-3-6 6 5-7-3-2 5-2z" fill="#222" /></svg>
        </TitleIcons>
      </MacroTitle>
      <MacroBody>
        <MacroTop>
          <SquareButton><Gear /></SquareButton>
          <MacroCombo>WŁAŚCIWOŚCI - sprawdź, zdefiniuj<Chevron /></MacroCombo>
          <SquareButton><SyncGearIcon /></SquareButton>
          <SquareButton $ml={1}><SyncArrowIcon /></SquareButton>
          <SquareButton $ml={1}><SyncDocIcon /></SquareButton>
        </MacroTop>
        <MacroTabs>
          <MacroTab $w={46} $active>BOM</MacroTab>
          <MacroTab $w={38}>Makra</MacroTab>
        </MacroTabs>
        <TabContent>
          <FetchButton>Pobierz dane</FetchButton>
          <ToolStrip $mt={5} $h={29}>
            <Grip />
            <ToolItem $ml={6}><Gear size={19} /><Caret /></ToolItem>
            <ToolSep $ml={6} />
            <ToolItem $ml={5}><TableIcon /><Caret /></ToolItem>
            <ToolSep $ml={6} />
            <ToolItem $ml={1}><TreeIcon /><Caret /></ToolItem>
            <ActiveTool $ml={4}><PropsIcon /><Caret /></ActiveTool>
            <ToolSep $ml={2} />
            <ToolItem $ml={3}><ExportIcon /></ToolItem>
            <ToolItem $ml={4}><SearchIcon /></ToolItem>
          </ToolStrip>
          <MenuAnchor>
            <BomTable />
            <Menu>
              {menuItems.map((m) => (
                <MenuItem key={m.text} $hot={m.hot} $tight={m.tight}>
                  <MenuIcon>{m.icon}</MenuIcon>
                  {m.text}
                  {m.sub && <SubArrow />}
                </MenuItem>
              ))}
            </Menu>
          </MenuAnchor>
          <ToolStrip $h={28}>
            <Grip />
            <ToolItem $ml={8}><Gear size={19} /></ToolItem>
          </ToolStrip>
        </TabContent>
        <StatusStrip>
          <Grip />
          <StatusIcon $ml={2}><Logo size={15} /></StatusIcon>
          <StatusIcon><YoutubeIcon /></StatusIcon>
          <StatusIcon><BookIcon /></StatusIcon>
          <StatusIcon><TeamIcon /></StatusIcon>
          <StatusText>Wszystkich: 27szt. | Przefiltrowanych: 16szt.</StatusText>
        </StatusStrip>
      </MacroBody>
    </MacroPanel>

    <RedFrame $x={194} $y={248} $w={625} $h={26} />
    <RedFrame $x={378} $y={839} $w={550} $h={29} />
    <RedFrame $x={1596} $y={146} $w={106} $h={369} />
    <StepBadge>7</StepBadge>
    <ArrowLayer width="1736" height="1192" viewBox="0 0 1736 1192">
      <defs>
        <filter id="arrowShadow" x="-30%" y="-30%" width="160%" height="160%">
          <feDropShadow dx="2" dy="3" stdDeviation="2" floodColor="#000" floodOpacity=".35" />
        </filter>
      </defs>
      <Arrow from={[1028, 246]} to={[934, 246]} />
      <Arrow from={[1308, 166]} to={[1260, 232]} />
      <Arrow from={[1655, 188]} to={[1624, 242]} />
      <Arrow from={[133, 590]} to={[85, 648]} />
    </ArrowLayer>
  </Desktop>
)

export default App
